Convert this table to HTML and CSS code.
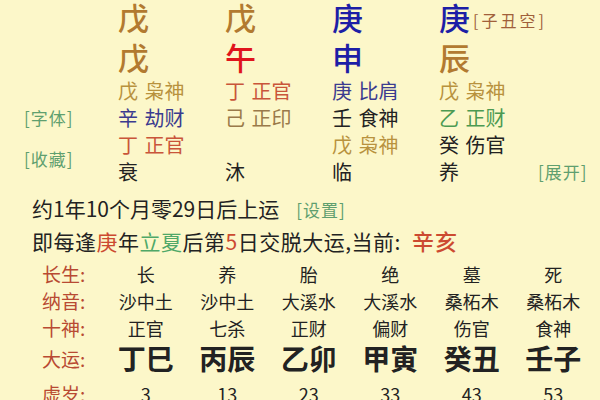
FILE: index.html
```html
<!DOCTYPE html>
<html lang="zh">
<head>
<meta charset="utf-8">
<link rel="stylesheet" href="styles.css">
</head>
<body>
<div class="page">
  <div class="stems">
    <span class="earth">戊</span>
    <span class="earth">戊</span>
    <span class="metal">庚</span>
    <span class="metal">庚<span class="kong">[子丑空]</span></span>
    <span class="earth">戊</span>
    <span class="fire">午</span>
    <span class="metal">申</span>
    <span class="earth">辰</span>
  </div>
  <div class="hidden">
    <span></span>
    <span class="s-gold">戊 枭神</span>
    <span class="s-fire">丁 正官</span>
    <span class="s-metal">庚 比肩</span>
    <span class="s-gold">戊 枭神</span>
    <span></span>

    <span class="link">[字体]</span>
    <span class="s-metal">辛 劫财</span>
    <span class="s-ji">己 正印</span>
    <span class="s-water">壬 食神</span>
    <span class="s-wood">乙 正财</span>
    <span></span>

    <span class="link fav">[收藏]</span>
    <span class="s-fire">丁 正官</span>
    <span></span>
    <span class="s-gold">戊 枭神</span>
    <span class="s-water">癸 伤官</span>
    <span></span>

    <span class="s-water">衰</span>
    <span class="s-water">沐</span>
    <span class="s-water">临</span>
    <span class="s-water">养</span>
    <span class="link more">[展开]</span>
  </div>
  <p class="line first">约1年10个月零29日后上运<span class="link small">[设置]</span></p>
  <p class="line second">即每逢<span class="red">庚</span>年<span class="green">立夏</span>后第<span class="red">5</span>日交脱大运,当前: <span class="red cur">辛亥</span></p>
  <div class="table">
    <span class="lbl">长生:</span>
    <span>长</span><span>养</span><span>胎</span><span>绝</span><span>墓</span><span>死</span>
    <span class="lbl">纳音:</span>
    <span>沙中土</span><span>沙中土</span><span>大溪水</span><span>大溪水</span><span>桑柘木</span><span>桑柘木</span>
    <span class="lbl">十神:</span>
    <span>正官</span><span>七杀</span><span>正财</span><span>偏财</span><span>伤官</span><span>食神</span>
    <span class="lbl dy">大运:</span>
    <span class="dy-v">丁巳</span><span class="dy-v">丙辰</span><span class="dy-v">乙卯</span><span class="dy-v">甲寅</span><span class="dy-v">癸丑</span><span class="dy-v">壬子</span>
    <span class="lbl age">虚岁:</span>
    <span class="age">3</span><span class="age">13</span><span class="age">23</span><span class="age">33</span><span class="age">43</span><span class="age">53</span>
  </div>
</div>
</body>
</html>
```

FILE: styles.css
```css
html, body {
  margin: 0;
  padding: 0;
  background: #fcf7c9;
}
body {
  width: 600px;
  height: 400px;
  overflow: hidden;
  font-family: "Noto Sans CJK SC", "Noto Sans", sans-serif;
  color: #222;
}
.page {
  display: flex;
  flex-direction: column;
}
.stems {
  display: grid;
  grid-template-columns: repeat(4, 107px);
  grid-template-rows: 34px 34px;
  row-gap: 6px;
  padding-left: 118px;
  font-size: 31px;
  line-height: 34px;
  font-weight: 500;
}
.stems > span { white-space: nowrap; }
.earth { color: #b27a30; }
.fire { color: #e0141c; }
.metal { color: #1d1ea6; }
.kong {
  font-size: 16px;
  letter-spacing: 3px;
  color: #a0603a;
  font-weight: normal;
  margin-left: 3px;
  vertical-align: 3px;
}
.hidden {
  display: grid;
  grid-template-columns: 118px 107px 107px 107px 99px 1fr;
  grid-auto-rows: 27px;
  margin-top: 3px;
  font-size: 20px;
  line-height: 27px;
}
.hidden > span { white-space: nowrap; word-spacing: 2px; }
.s-gold { color: #b8923e; }
.s-fire { color: #c9553a; }
.s-metal { color: #3b3b8f; }
.s-ji { color: #9a7a4a; }
.s-water { color: #222; }
.s-wood { color: #4c9a52; }
.link {
  color: #5f9f6f;
  font-size: 17px;
  letter-spacing: 1px;
}
.hidden .link { padding-left: 24px; }
.hidden .fav {
  grid-column: 1;
  grid-row: 3 / 5;
  align-self: center;
}
.hidden .more { padding-left: 0; }
.line {
  margin: 0;
  padding-left: 32px;
  font-size: 21px;
  line-height: 31px;
  white-space: nowrap;
}
.line.first { margin-top: 8px; }
.line.second { letter-spacing: 0.5px; }
.line .small { margin-left: 17px; }
.red { color: #cc4a30; }
.green { color: #4fa868; }
.cur { margin-left: 6px; font-size: 22px; font-weight: 500; letter-spacing: 1px; }
.table {
  display: grid;
  grid-template-columns: 105px repeat(6, 81.5px);
  grid-template-rows: 27px 27px 27px 34px 32px;
  margin-top: 3px;
  font-size: 18px;
  text-align: center;
  align-items: center;
}
.table > span { white-space: nowrap; }
.table .lbl {
  text-align: left;
  padding-left: 42px;
  color: #b84a32;
  font-size: 19px;
}
.dy-v {
  font-size: 28px;
  font-weight: bold;
}
.age { align-self: end; }
```
